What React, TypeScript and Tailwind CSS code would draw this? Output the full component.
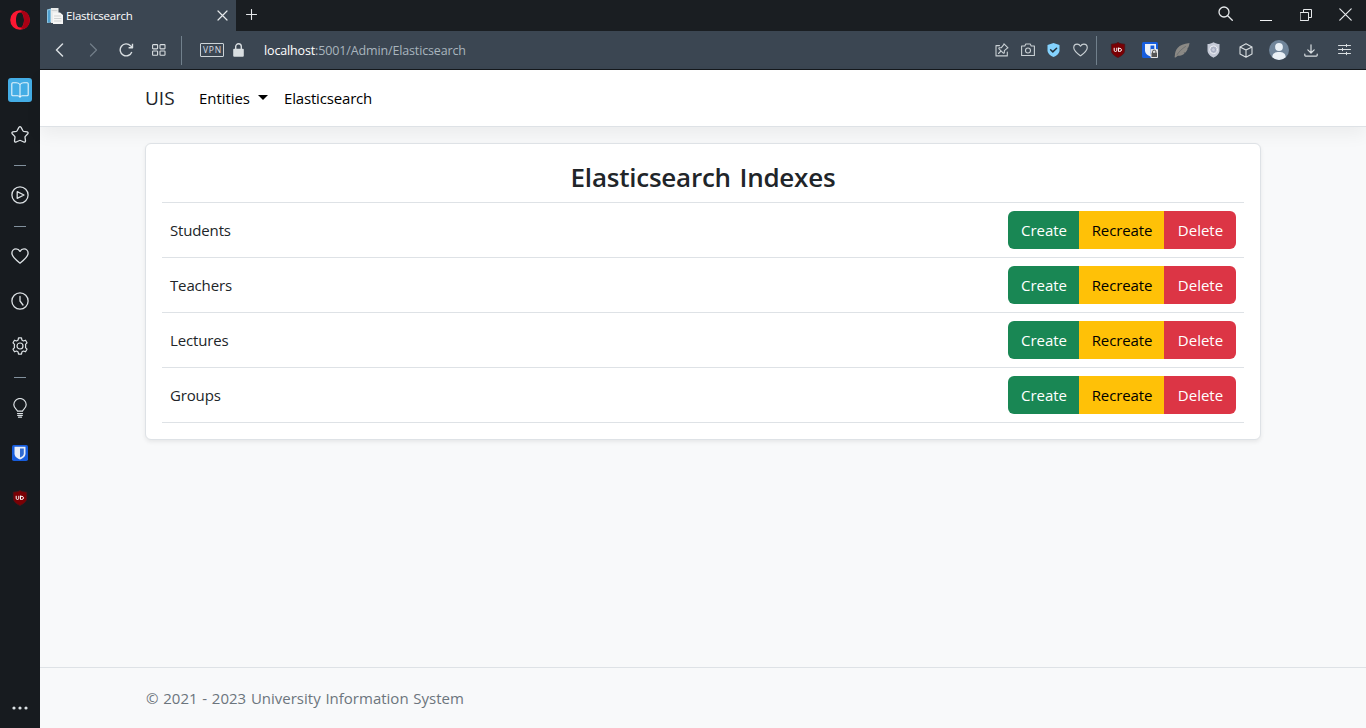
import React from "react";

type IconProps = { w: number; h: number; children: React.ReactNode; className?: string; sw?: number };

function Icon({ w, h, children, className = "", sw = 1.2 }: IconProps) {
  return (
    <svg
      width={w}
      height={h}
      viewBox={`0 0 ${w} ${h}`}
      fill="none"
      stroke="currentColor"
      strokeWidth={sw}
      strokeLinejoin="round"
      strokeLinecap="round"
      className={`block shrink-0 ${className}`}
    >
      {children}
    </svg>
  );
}

function Cell({ className, children }: { className: string; children: React.ReactNode }) {
  return <div className={`flex shrink-0 items-center justify-center ${className}`}>{children}</div>;
}

function SideDash({ className = "" }: { className?: string }) {
  return (
    <Cell className={`h-4 w-10 ${className}`}>
      <div className="h-px w-3 bg-[#82919d]" />
    </Cell>
  );
}

function UblockShield() {
  return (
    <Icon w={16} h={16}>
      <path d="M8 .6C6 2 3.5 2 1.300 2.200v6c0 3.600 3.400 5.800 6.700 7.300 3.300-1.500 6.700-3.700 6.700-7.300v-6C12.500 2 10 2 8 .6z" fill="#7a0004" stroke="#4d1419" strokeWidth="0.8" />
      <path d="M4.200 6.200v2q0 1.300 1.300 1.300t1.300-1.300v-2M8.500 6.200v3.300h.8q2.200 0 2.200-1.650T9.300 6.200z" stroke="#fff" strokeWidth="1" />
    </Icon>
  );
}

function HeartIcon({ w, h }: { w: number; h: number }) {
  return (
    <svg width={w} height={h} viewBox="0 0 18 16" fill="none" stroke="currentColor" strokeWidth="1.35" strokeLinejoin="round">
      <path d="M9 15.100C5 12 .9 8.900.9 5.200.9 2.700 2.700.9 5 .9c1.700 0 3.100.9 4 2.500C9.900 1.800 11.300.9 13 .9c2.300 0 4.100 1.800 4.100 4.300 0 3.700-4.100 6.800-8.100 9.900z" />
    </svg>
  );
}

function Sidebar() {
  return (
    <aside className="flex h-full w-10 shrink-0 flex-col items-center bg-[#171b1f] text-[#dce1e4]">
      <Cell className="h-10 w-10">
        <Icon w={20} h={20} sw={0}>
          <path fillRule="evenodd" fill="#fb1732" d="M10 .2a9.800 9.800 0 1 0 0 19.600A9.800 9.800 0 0 0 10 .2zM10 2.500c2.600 0 4 3.500 4 7.500s-1.400 7.500-4 7.500S6 14 6 10s1.400-7.500 4-7.500z" />
          <path fill="#a90014" d="M10 2.500c1.200-1.100 2.800-1.700 4.500-1.200A9.800 9.800 0 0 1 14.500 18.700c-1.700.5-3.300-.1-4.500-1.200 2.600 0 4-3.500 4-7.500s-1.400-7.500-4-7.500z" />
        </Icon>
      </Cell>
      <Cell className="mt-7 h-[45px] w-10 pb-px">
        <div className="flex h-6 w-6 items-center justify-center rounded-[3px] bg-[#44ade5] text-[#e8f5fc]">
          <Icon w={18} h={16} sw={1.1}>
            <path d="M9 2.500C8 1.200 6.800.8 5 .8H1.800Q.8.8.8 1.800v11q0 1 1 1h4.700c1 0 2 .4 2.500 1.400.5-1 1.500-1.400 2.500-1.400h4.700q1 0 1-1v-11q0-1-1-1H13c-1.800 0-3 .4-4 1.700zM9 2.500v12.500" />
          </Icon>
        </div>
      </Cell>
      <Cell className="h-[45px] w-10 pb-0.5">
        <Icon w={18} h={17} sw={1.3}>
          <path d="M7.900 1.400q1.100-1.500 2.200 0l1.800 3.400q.2.400.7.500l3.600.6q1.500.5.600 1.800l-2.500 2.700q-.3.400-.3.800l.5 3.700q-.1 1.500-1.600 1.100L9.500 14.500q-.5-.2-1 0L5.100 16q-1.500.4-1.600-1.100l.5-3.700q0-.4-.3-.8L1.200 7.700q-.9-1.300.6-1.800l3.600-.6q.5-.1.700-.5z" />
        </Icon>
      </Cell>
      <SideDash className="pb-0.5" />
      <Cell className="-mt-px h-[45px] w-10 pb-px">
        <Icon w={18} h={18} sw={1.3}>
          <circle cx="9" cy="9" r="8.100" />
          <path d="M6.200 5.700v6.600L13 9z" />
        </Icon>
      </Cell>
      <SideDash />
      <Cell className="h-[45px] w-10 pb-px">
        <HeartIcon w={18} h={16} />
      </Cell>
      <Cell className="h-[45px] w-10 pb-px">
        <Icon w={18} h={18} sw={1.3}>
          <circle cx="9" cy="9" r="8.100" />
          <path d="M9 4.500V9l3 4" />
        </Icon>
      </Cell>
      <Cell className="h-[45px] w-10 pb-px">
        <Icon w={18} h={18} sw={1.2}>
          <circle cx="9" cy="9" r="3" />
          <path d="M7.500.9h3l.4 2.200 1.500.9 2.100-.8L16 5.800l-1.500 1.600q.4 1.600 0 3.200L16 12.200l-1.500 2.600-2.100-.8-1.500.9-.4 2.200h-3l-.4-2.200-1.500-.9-2.100.8L2 12.200l1.500-1.600q-.4-1.600 0-3.200L2 5.800l1.500-2.600 2.100.8 1.500-.9z" />
        </Icon>
      </Cell>
      <SideDash />
      <Cell className="h-[45px] w-10 pt-px">
        <Icon w={14} h={20} sw={1.2}>
          <path d="M4.500 13.200c0-1.500-3.700-3-3.700-6.500a6.200 6.200 0 0 1 12.400 0c0 3.500-3.700 5-3.700 6.500zM4.500 15.500h5M4.700 17.400h4.600M5.500 19.200h3" />
        </Icon>
      </Cell>
      <Cell className="h-[45px] w-10 pt-px">
        <Icon w={16} h={16} sw={0}>
          <rect width="16" height="16" rx="1.800" fill="#175ddc" />
          <path d="M2.500 1.700h11v6.800c0 3-2.500 4.800-5.500 6-3-1.200-5.500-3-5.500-6z" fill="#e8eef8" />
          <path d="M8 3.400h3.800v5c0 2-1.600 3.100-3.800 4.200z" fill="#2f6ad0" />
        </Icon>
      </Cell>
      <Cell className="h-[45px] w-10">
        <UblockShield />
      </Cell>
      <Cell className="mt-auto h-10 w-10">
        <Icon w={18} h={4} sw={0}>
          <circle cx="3" cy="2" r="1.600" fill="currentColor" />
          <circle cx="9" cy="2" r="1.600" fill="currentColor" />
          <circle cx="15" cy="2" r="1.600" fill="currentColor" />
        </Icon>
      </Cell>
    </aside>
  );
}

function TitleBar() {
  return (
    <div className="flex h-[31px] shrink-0 bg-[#1a1e22] text-[#e6e9eb]">
      <div className="flex h-full w-[196px] items-center bg-[#3b4652] pl-[7px] pr-2">
        <Icon w={16} h={16} sw={0}>
          <path d="M0 1.500l4-1v14l-4 .5z" fill="#8cc3e0" />
          <path d="M1 2.500l2-.5v12l-2 .5z" fill="#4f9fce" />
          <path d="M4 0h7.500v15H4z" fill="#e9ebeb" />
          <path d="M6 4.500h7L16 7v9H6z" fill="#f6f6f5" />
          <path d="M5 2.500h5M7.500 8h6M7.500 10.500h6.500M7.500 13h6.500" stroke="#cfd2d3" strokeWidth="1" />
        </Icon>
        <span className="ml-[3px] mt-px text-[11.500px] leading-4 tracking-[-0.2px] text-white">Elasticsearch</span>
        <Icon w={11} h={11} sw={1.2} className="ml-auto">
          <path d="M1 1l9 9M10 1l-9 9" />
        </Icon>
      </div>
      <Cell className="h-[29px] w-[31px]">
        <Icon w={11} h={11} sw={1.100}>
          <path d="M5.500.5v10M.5 5.500h10" />
        </Icon>
      </Cell>
      <div className="ml-auto flex h-[30px]">
        <Cell className="w-10 pb-[3px] pr-px">
          <Icon w={15} h={15} sw={1.300}>
            <circle cx="6" cy="6" r="5" />
            <path d="M9.700 9.700l4.600 4.600" />
          </Icon>
        </Cell>
        <Cell className="w-10 pt-[10px]">
          <div className="h-px w-3 bg-[#f0f2f3]" />
        </Cell>
        <Cell className="w-10">
          <Icon w={12} h={12} sw={1}>
            <path d="M.5 3.500h8v8h-8zM3.500 3.500v-3h8v8h-3" />
          </Icon>
        </Cell>
        <Cell className="w-10 pb-px pr-px">
          <Icon w={13} h={13} sw={1.200}>
            <path d="M.8.8l11.400 11.400M12.200.8L.8 12.200" />
          </Icon>
        </Cell>
      </div>
    </div>
  );
}

function Toolbar() {
  return (
    <div className="flex h-[39px] shrink-0 items-center border-b border-[#15191d] bg-[#3b4652] pl-[3px] pr-1 text-[#d9dee1]">
      <Cell className="w-[33px]">
        <Icon w={9} h={14} sw={1.500}>
          <path d="M7.500 1L1.500 7l6 6" />
        </Icon>
      </Cell>
      <Cell className="w-[33px] pl-px text-[#717d87]">
        <Icon w={9} h={14} sw={1.300}>
          <path d="M1.500 1l6 6-6 6" />
        </Icon>
      </Cell>
      <Cell className="w-[33px] pl-0.5">
        <Icon w={15} h={14} sw={1.400}>
          <path d="M12.800 9A6 6 0 1 1 11.500 2.700L13.500 4.500M13.500.8v3.900H9.600" strokeLinecap="butt" />
        </Icon>
      </Cell>
      <Cell className="w-[33px] pl-px">
        <Icon w={14} h={12} sw={1.100}>
          <rect x=".6" y=".6" width="5" height="4.300" rx=".6" />
          <rect x="8" y=".6" width="5" height="4.300" rx=".6" />
          <rect x=".6" y="7" width="5" height="4.300" rx=".6" />
          <rect x="8" y="7" width="5" height="4.300" rx=".6" />
        </Icon>
      </Cell>
      <div className="ml-1.5 h-[29px] w-px bg-[#71808c]" />
      <div className="ml-[18px] flex h-[14px] w-6 items-center justify-center rounded-[1px] border border-[#ccd3d7] pl-px text-[8.500px] font-medium leading-none tracking-[0.800px]">
        VPN
      </div>
      <Icon w={11} h={14} sw={1.400} className="ml-[9px]">
        <path d="M2.700 6V3.600a2.800 2.800 0 0 1 5.600 0V6" />
        <rect x=".2" y="5.700" width="10.600" height="8" rx="1" fill="currentColor" stroke="none" />
      </Icon>
      <div className="ml-5 mt-0.5 text-[12.500px] leading-5 tracking-[-0.140px] text-[#a9b5be]">
        <span className="text-white">localhost</span>:5001/Admin/Elasticsearch
      </div>
      <div className="ml-auto flex items-center">
        <Cell className="w-[26px] text-[#c9d0d4]">
          <Icon w={14} h={14} sw={1.100}>
            <path d="M4.500 2.600H1v10.300h11.300V9" />
            <path d="M9 .8l4 4-1 .5-2.600 2.300-.1 2.300-1 .3L3.800 5.700l.3-1 2.300-.1L8.600 1.800zM6 8l-2.500 2.500" />
          </Icon>
        </Cell>
        <Cell className="w-[26px] text-[#c9d0d4]">
          <Icon w={14} h={14} sw={1.100}>
            <path d="M.6 3h3.200l1-2h4.400l1 2h3.200v9.500H.6z" />
            <circle cx="7" cy="7.500" r="2.500" />
          </Icon>
        </Cell>
        <Cell className="w-[26px] pr-px">
          <Icon w={13} h={14} sw={0}>
            <path d="M6.500 0l6 2v5.500c0 3-3 5.300-6 6.500-3-1.200-6-3.500-6-6.500V2z" fill="#84d3ff" />
            <path d="M3.600 6.800l2.200 2.100 3.800-3.700" stroke="#24343f" strokeWidth="1.500" />
          </Icon>
        </Cell>
        <Cell className="w-[26px] text-[#c9d0d4]">
          <HeartIcon w={15} h={14} />
        </Cell>
        <div className="ml-[3px] h-[29px] w-px bg-[#71808c]" />
        <Cell className="ml-[5px] w-8">
          <UblockShield />
        </Cell>
        <Cell className="w-8">
          <Icon w={16} h={16} sw={0}>
            <rect width="16" height="16" rx="1.500" fill="#175ddc" />
            <path d="M3 2h11v6.500c0 3-2.700 4.900-5.500 6C5.700 13.400 3 11.500 3 8.500z" fill="#edf1f7" />
            <path d="M8.500 3.500h3.800v5c0 2-1.600 3.200-3.800 4.200z" fill="#175ddc" />
            <rect x="8.500" y="7" width="7.500" height="9" rx="1" fill="#e5e5e5" />
            <path d="M10.500 11V9.800a1.700 1.700 0 0 1 3.400 0V11" stroke="#555" strokeWidth="1" />
            <rect x="9.500" y="10.800" width="5.500" height="4.200" fill="#555" />
          </Icon>
        </Cell>
        <Cell className="w-8">
          <Icon w={16} h={16} sw={0}>
            <path d="M.8 14C1.200 8 3.500 2.200 15.500 1c-.2 1.700-.5 3-1.200 4.400l-1.300.9.900.3c-.6 1.500-1.300 2.700-2.300 3.800l-2 .4 1 .6c-1.800 1.700-4.300 2.400-6.800 2.300L1.600 15.500l-1.100-.3z" fill="#8b8985" />
            <path d="M3 12.800C5 9.500 8 6.800 11.500 4.500" stroke="#62656a" strokeWidth=".7" />
          </Icon>
        </Cell>
        <Cell className="w-8 pr-px">
          <Icon w={13} h={16} sw={0}>
            <path d="M6.500.3c2 1.300 4 1.700 6 1.800v6.400c0 3.300-3 5.700-6 7.200-3-1.500-6-3.900-6-7.200V2.100c2-.1 4-.5 6-1.800z" fill="#c5cad7" />
            <circle cx="6.500" cy="7.700" r="3.800" fill="#b3b9ca" stroke="#eef0f5" strokeWidth="1" />
            <circle cx="6.500" cy="7.700" r="2" fill="#c9cddb" stroke="#9aa1b6" strokeWidth=".7" />
          </Icon>
        </Cell>
        <Cell className="w-8">
          <Icon w={14} h={15} sw={1.100}>
            <path d="M7 .8l6 3.100v7.200l-6 3.100-6-3.100V3.900zM1 3.900L7 7l6-3.100M7 7v7.200" />
          </Icon>
        </Cell>
        <Cell className="w-[33px]">
          <Icon w={20} h={20} sw={0}>
            <circle cx="10" cy="10" r="10" fill="#70859a" />
            <circle cx="10" cy="7" r="3.900" fill="#e9f0f6" />
            <path d="M3.300 17.300c0-4 3-5.300 6.700-5.300s6.700 1.300 6.700 5.300A10 10 0 0 1 10 20a10 10 0 0 1-6.700-2.700z" fill="#e9f0f6" />
          </Icon>
        </Cell>
        <Cell className="w-[33px] pr-px">
          <Icon w={14} h={13} sw={1.200}>
            <path d="M7 .8v8M3.800 5.800L7 9l3.200-3.200M.8 10v1.300q0 .8.800.8h10.800q.8 0 .8-.8V10" />
          </Icon>
        </Cell>
        <Cell className="w-[34px] pr-px">
          <Icon w={13} h={12} sw={1}>
            <path d="M.5 1.500h12M.5 5.500h12M.5 9.500h12M8.500.3v2.400M4.500 4.300v2.400M8.500 8.300v2.400" />
          </Icon>
        </Cell>
      </div>
    </div>
  );
}

const indexes = ["Students", "Teachers", "Lectures", "Groups"];

function IndexRow({ name }: { name: string }) {
  return (
    <div className="flex h-[55px] items-center justify-between border-b border-[#dee2e6] px-2">
      <span className="text-[15px] leading-6 tracking-[-0.150px]">{name}</span>
      <div className="flex h-[38px] overflow-hidden rounded-md text-[15px] leading-6">
        <button className="w-[71px] bg-[#198754] pl-px text-white">Create</button>
        <button className="w-[85px] bg-[#ffc107] pl-px tracking-[-0.120px] text-black">Recreate</button>
        <button className="w-[72px] bg-[#dc3545] pl-px text-white">Delete</button>
      </div>
    </div>
  );
}

function Page() {
  return (
    <div className="flex min-h-0 flex-1 flex-col bg-[#f8f9fa] text-[#212529]">
      <nav className="flex h-[57px] shrink-0 items-center border-b border-[#dee2e6] bg-white pl-[105px] shadow-[0_8px_16px_rgba(0,0,0,0.05)]">
        <span className="w-[54px] text-[19px] leading-[30px]">UIS</span>
        <span className="flex w-[85px] items-center text-[15px] leading-6 tracking-[-0.050px] text-black">
          Entities
          <svg width="10" height="5" viewBox="0 0 10 5" className="ml-2 -mt-0.5">
            <path d="M0 0h10L5 5z" fill="currentColor" />
          </svg>
        </span>
        <span className="text-[15px] leading-6 tracking-[-0.170px] text-black">Elasticsearch</span>
      </nav>
      <main className="flex-1 px-[105px] pt-4">
        <section className="rounded-md border border-[#dee2e6] bg-white p-4 shadow-[0_2px_4px_rgba(0,0,0,0.075)]">
          <h3 className="h-[43px] border-b border-[#dee2e6] text-center text-[26px] font-semibold leading-[34px] tracking-[-0.230px] [word-spacing:2px]">
            Elasticsearch Indexes
          </h3>
          {indexes.map((name) => (
            <IndexRow key={name} name={name} />
          ))}
        </section>
      </main>
      <footer className="flex h-[61px] shrink-0 items-center border-t border-[#dee2e6] pl-[106px] text-[15px] text-[#6c757d] [word-spacing:0.850px]">
        © 2021 - 2023 University Information System
      </footer>
    </div>
  );
}

export default function App() {
  return (
    <div className="flex h-[728px] w-[1366px] overflow-hidden font-['Open_Sans','Noto_Sans',sans-serif]">
      <Sidebar />
      <div className="flex min-w-0 flex-1 flex-col">
        <TitleBar />
        <Toolbar />
        <Page />
      </div>
    </div>
  );
}
